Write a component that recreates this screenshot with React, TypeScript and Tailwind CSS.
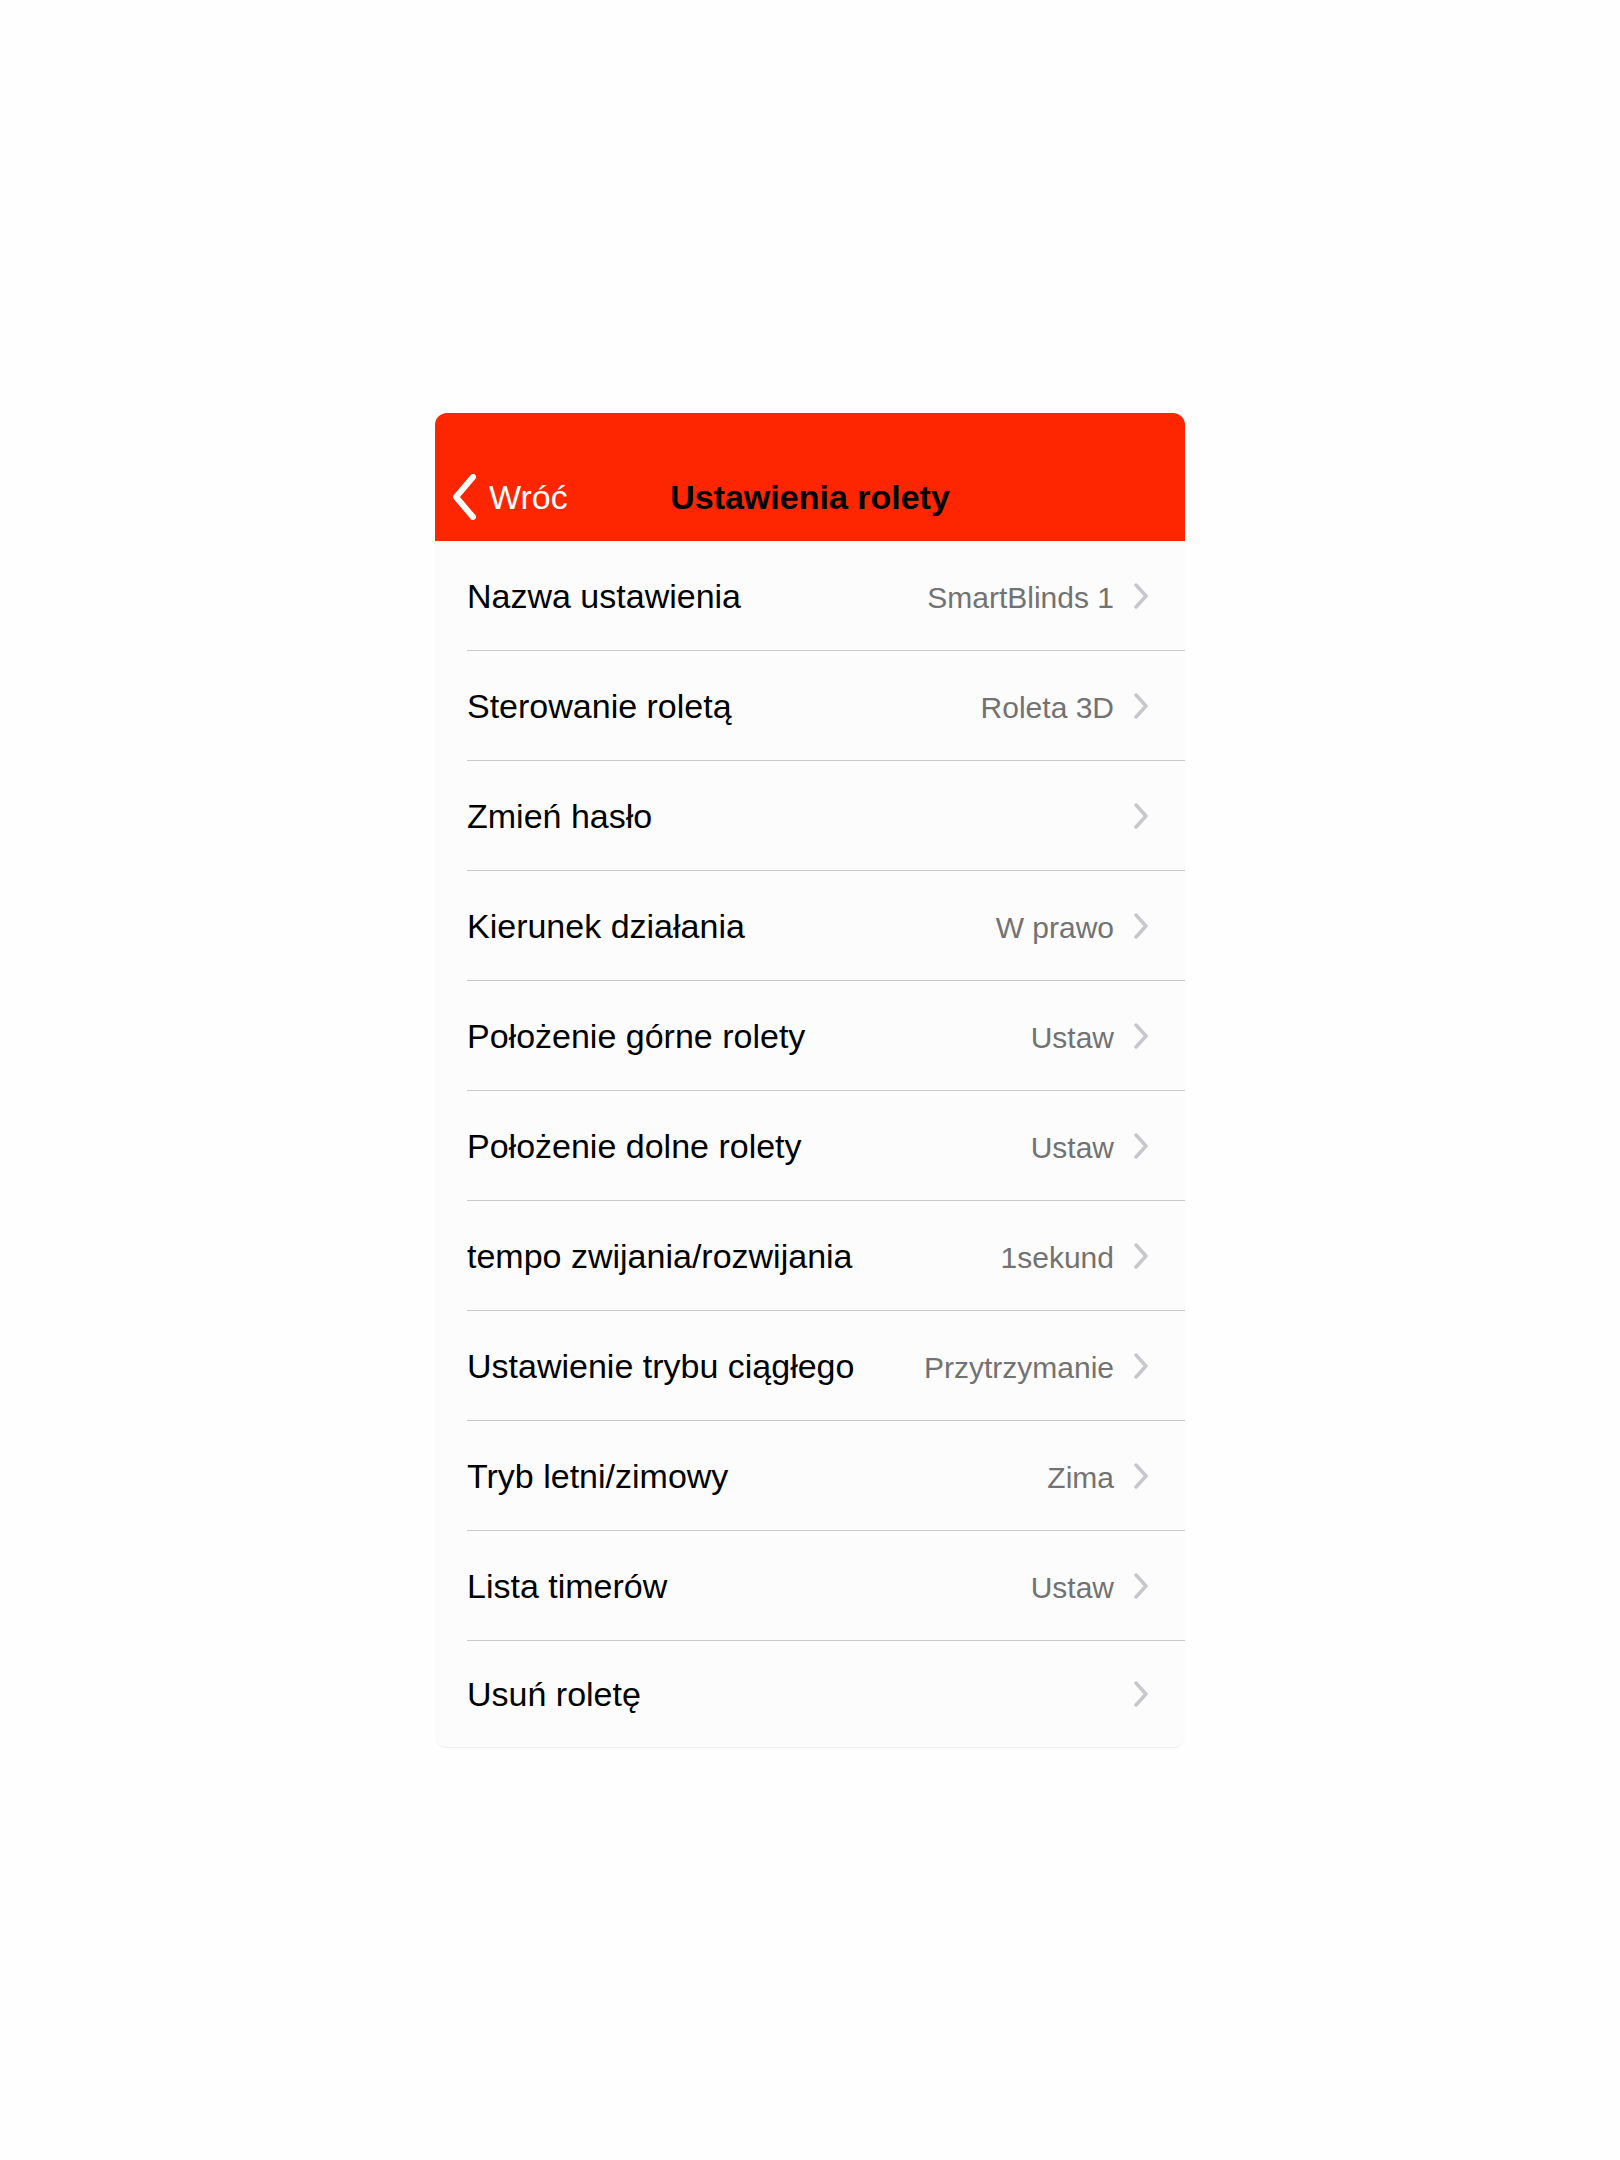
import React from 'react';

type Row = { label: string; value?: string };

const rows: Row[] = [
    { label: 'Nazwa ustawienia', value: 'SmartBlinds 1' },
    { label: 'Sterowanie roletą', value: 'Roleta 3D' },
    { label: 'Zmień hasło' },
    { label: 'Kierunek działania', value: 'W prawo' },
    { label: 'Położenie górne rolety', value: 'Ustaw' },
    { label: 'Położenie dolne rolety', value: 'Ustaw' },
    { label: 'tempo zwijania/rozwijania', value: '1sekund' },
    { label: 'Ustawienie trybu ciągłego', value: 'Przytrzymanie' },
    { label: 'Tryb letni/zimowy', value: 'Zima' },
    { label: 'Lista timerów', value: 'Ustaw' },
    { label: 'Usuń roletę' },
];

function Chevron() {
    return (
        <svg width="16" height="26" viewBox="0 0 16 26" fill="none" className="shrink-0">
            <polyline points="3,2 13,13 3,24" stroke="#c7c7cc" strokeWidth="3.5" strokeLinecap="round" strokeLinejoin="round" />
        </svg>
    );
}

function SettingRow({ row, last }: { row: Row; last: boolean }) {
    return (
        <div className={last ? 'h-[106px] pl-[32px]' : 'h-[110px] pl-[32px]'}>
            <div
                className={
                    'h-full flex items-center pr-[36px] ' +
                    (last ? '' : 'border-b border-[#c8c7cc]')
                }
            >
                <span className="text-[34px] text-black leading-none flex-1">{row.label}</span>
                {row.value && (
                    <span className="text-[30px] text-[#727272] leading-none mr-[19px] mt-[5px]">{row.value}</span>
                )}
                <Chevron />
            </div>
        </div>
    );
}

export default function App() {
    return (
        <main
            className="min-h-screen w-full bg-[#fefefe] flex justify-center pt-[413px]"
            style={{ fontFamily: '"Liberation Sans", Arial, sans-serif' }}
        >
            <div className="w-[750px] h-fit rounded-[12px] bg-[#fcfcfc] border-b border-[#f0f0f0] overflow-hidden">
                {/* Header */}
                <div className="bg-[#fe2600] h-[128px] pt-[40px]">
                    <div className="relative h-[88px] flex items-center justify-center">
                        <div className="absolute left-[16px] top-0 h-full flex items-center gap-[10px]">
                            <svg width="28" height="46" viewBox="0 0 28 46" fill="none">
                                <polyline points="22,3 5,23 22,43" stroke="#ffffff" strokeWidth="6" strokeLinecap="round" strokeLinejoin="round" />
                            </svg>
                            <span className="text-[34px] text-white leading-none">Wróć</span>
                        </div>
                        <h1 className="text-[34px] font-bold text-black leading-none">Ustawienia rolety</h1>
                    </div>
                </div>

                {/* Rows */}
                <div>
                    {rows.map((row, i) => (
                        <SettingRow key={row.label} row={row} last={i === rows.length - 1} />
                    ))}
                </div>
            </div>
        </main>
    );
}
